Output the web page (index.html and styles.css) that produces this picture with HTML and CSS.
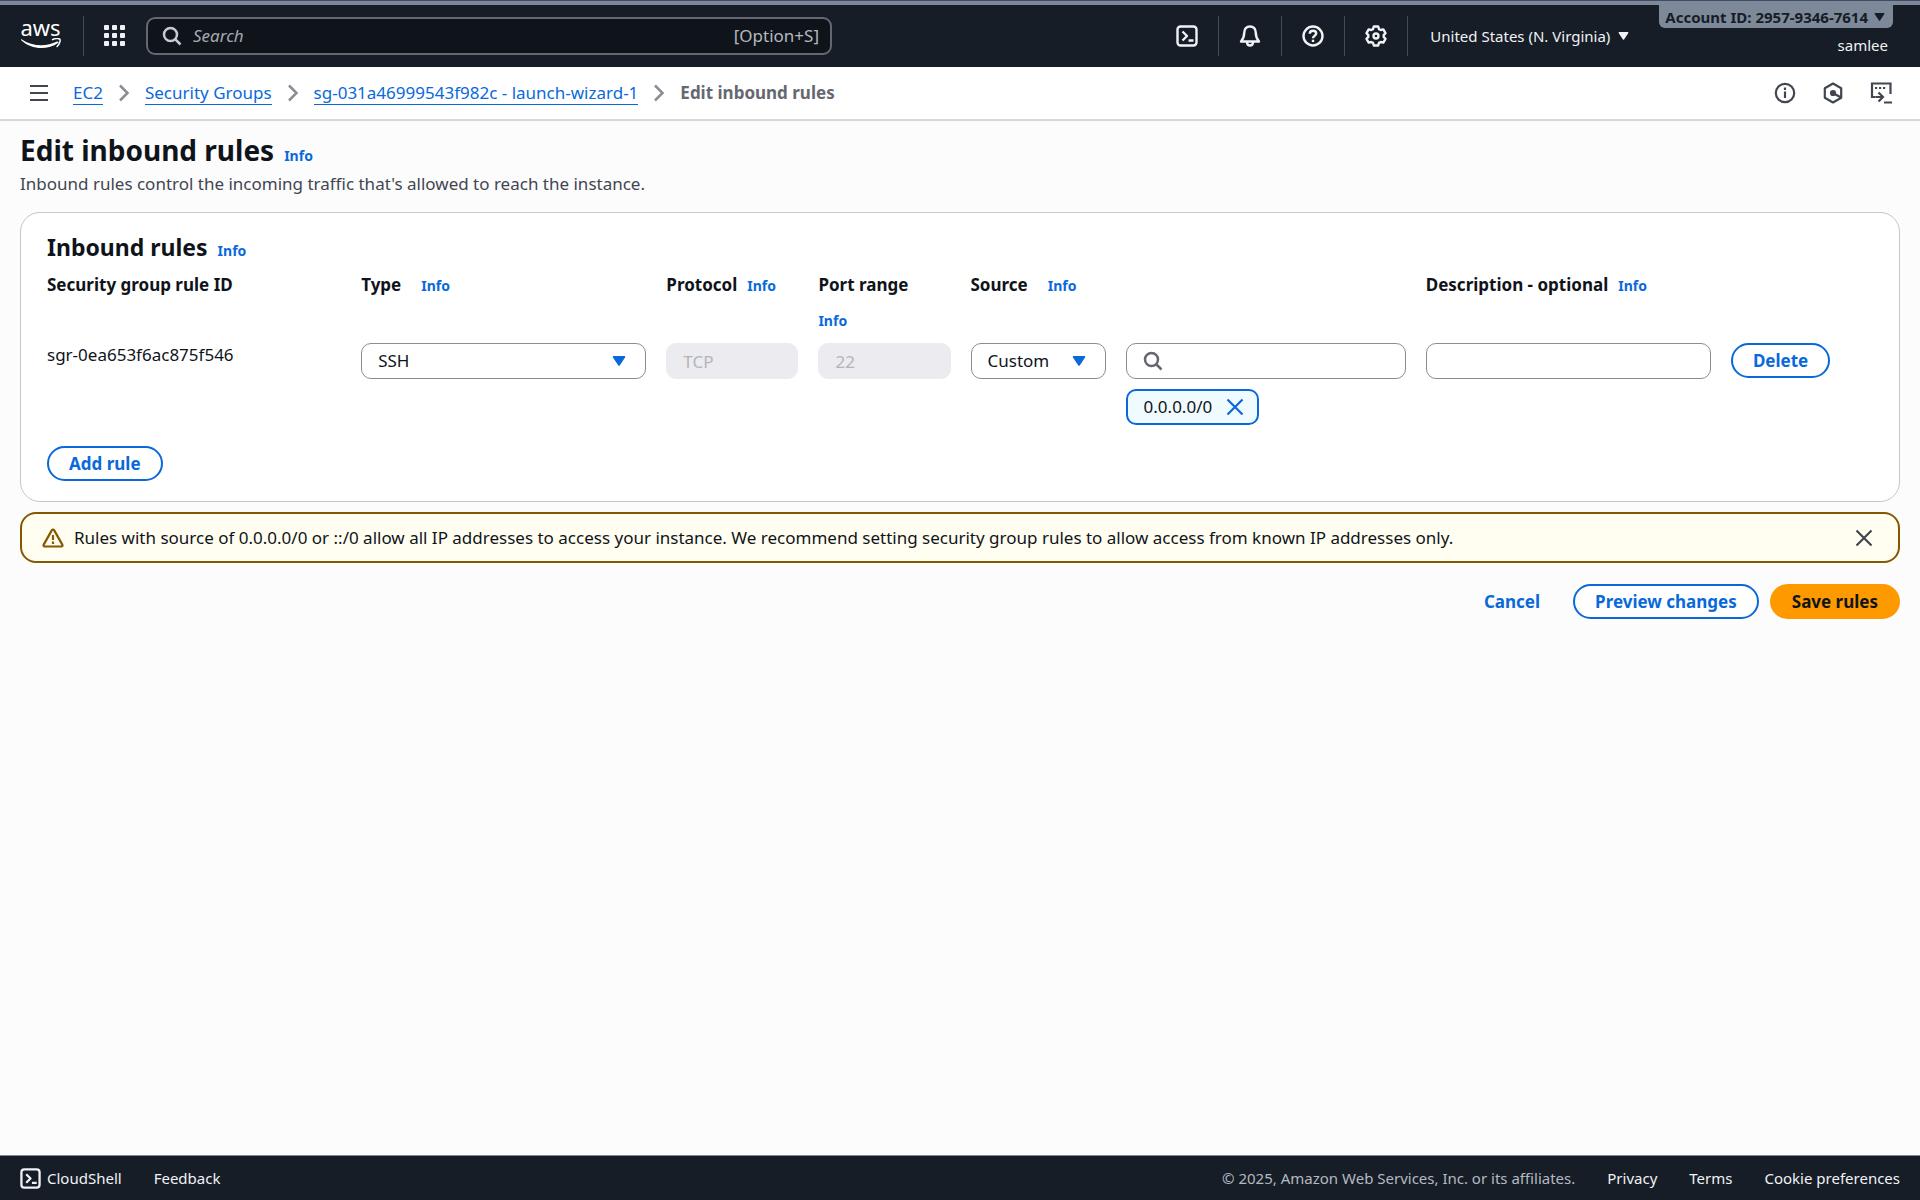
FILE: index.html
```html
<!DOCTYPE html>
<html lang="en">
<head>
<meta charset="utf-8">
<meta name="viewport" content="width=device-width, initial-scale=1">
<title>Edit inbound rules | EC2</title>
<link rel="stylesheet" href="styles.css">
</head>
<body>
<svg class="sprite" aria-hidden="true">
  <symbol id="i-caret" viewBox="0 0 14 12"><path d="M1.500 1h11a.8.8 0 0 1 .7 1.200l-5.500 8.200a.9.9 0 0 1-1.400 0L.8 2.200A.8.8 0 0 1 1.500 1z" fill="currentColor"/></symbol>
  <symbol id="i-search" viewBox="0 0 20 20"><g fill="none" stroke="currentColor" stroke-width="2.500"><circle cx="8.500" cy="8.500" r="6.500"/><path d="M13 13l5.500 5.500"/></g></symbol>
  <symbol id="i-close" viewBox="0 0 18 18"><path d="M1.500 1.500l15 15M16.500 1.500l-15 15" stroke="currentColor" stroke-width="2.200" fill="none"/></symbol>
  <symbol id="i-chevron" viewBox="0 0 12 18"><path d="M2 1.500L9.500 9 2 16.500" stroke="currentColor" stroke-width="2.500" fill="none"/></symbol>
  <symbol id="i-shell" viewBox="0 0 22 22"><g fill="none" stroke="currentColor" stroke-width="2.400" stroke-linejoin="round"><rect x="1.500" y="1.500" width="19" height="19" rx="3"/><path d="M6.500 6.500l4.500 4.500-4.500 4.500M12.500 15.500h5"/></g></symbol>
</svg>

<header class="topbar">
  <a class="logo" href="#" aria-label="AWS home">
    <span class="logo-text">aws</span>
    <svg class="logo-smile" viewBox="0 0 40 11"><path d="M0.500 1.200C11 8.500 25 9.200 36 3.600c1.300-.6 2.200.6 1 1.500C27 12.200 10 12 .3 2.300c-.7-.7-.3-1.400.2-1.100z" fill="#fff"/><path d="M31.500 1.600c2.500-1.200 6.500-1.400 7.300-.4.900 1.100-.3 5.300-2.700 7.300" fill="none" stroke="#fff" stroke-width="1.500" stroke-linecap="round"/></svg>
  </a>
  <button class="apps" type="button" aria-label="Services">
    <svg width="22" height="22" viewBox="0 0 22 22" fill="currentColor"><rect width="5" height="5" rx="1"/><rect x="8" width="5" height="5" rx="1"/><rect x="16" width="5" height="5" rx="1"/><rect y="8" width="5" height="5" rx="1"/><rect x="8" y="8" width="5" height="5" rx="1"/><rect x="16" y="8" width="5" height="5" rx="1"/><rect y="16" width="5" height="5" rx="1"/><rect x="8" y="16" width="5" height="5" rx="1"/><rect x="16" y="16" width="5" height="5" rx="1"/></svg>
  </button>
  <label class="search">
    <svg width="20" height="20"><use href="#i-search"/></svg>
    <input type="search" placeholder="Search" aria-label="Search">
    <span class="shortcut">[Option+S]</span>
  </label>
  <nav class="tools" aria-label="Console tools">
    <button type="button" aria-label="CloudShell"><svg width="22" height="22"><use href="#i-shell"/></svg></button>
    <button type="button" aria-label="Notifications"><svg width="22" height="22" viewBox="0 0 22 22" fill="none" stroke="currentColor" stroke-width="2.400" stroke-linejoin="round"><path d="M11 1.500c-3.600 0-5.700 2.500-5.700 5.800 0 4.200-1 6.500-3.300 9.200h18c-2.300-2.700-3.300-5-3.300-9.200 0-3.300-2.100-5.800-5.700-5.800z"/><path d="M8 17c0 2 1.200 3.500 3 3.500s3-1.500 3-3.500"/></svg></button>
    <button type="button" aria-label="Help"><svg width="22" height="22" viewBox="0 0 22 22" fill="none" stroke="currentColor" stroke-width="2.400"><circle cx="11" cy="11" r="9.500"/><path d="M7.800 8.800c0-2 1.400-3 3.200-3s3.200 1.100 3.200 2.800c0 2.200-3.200 2.200-3.200 4.700"/><path d="M11 14.700v2.400"/></svg></button>
    <button type="button" aria-label="Settings"><svg width="22" height="22" viewBox="0 0 22 22" fill="none" stroke="currentColor" stroke-width="2.400" stroke-linejoin="round"><path d="M8.800 1.500h4.400l.8 2.600 1.700.9 2.600-.6 2.200 3.700-1.800 2v1.800l1.800 2-2.200 3.700-2.600-.6-1.700.9-.8 2.600H8.800L8 17.900 6.300 17l-2.600.6-2.200-3.700 1.800-2v-1.800l-1.800-2 2.200-3.700 2.600.6L8 4.100z"/><circle cx="11" cy="11" r="2.500"/></svg></button>
  </nav>
  <button class="region" type="button">United States (N. Virginia) <svg width="11" height="10"><use href="#i-caret"/></svg></button>
  <div class="account">
    <button class="account-id" type="button">Account ID: 2957-9346-7614 <svg width="11" height="10"><use href="#i-caret"/></svg></button>
    <span class="user">samlee</span>
  </div>
</header>

<div class="crumbbar">
  <button class="menu" type="button" aria-label="Open navigation"><svg width="18" height="16" viewBox="0 0 18 16" stroke="currentColor" stroke-width="2"><path d="M0 1h18M0 8h18M0 15h18"/></svg></button>
  <nav class="crumbs" aria-label="Breadcrumbs">
    <a href="#">EC2</a>
    <svg width="12" height="18"><use href="#i-chevron"/></svg>
    <a href="#">Security Groups</a>
    <svg width="12" height="18"><use href="#i-chevron"/></svg>
    <a href="#">sg-031a46999543f982c - launch-wizard-1</a>
    <svg width="12" height="18"><use href="#i-chevron"/></svg>
    <span aria-current="page">Edit inbound rules</span>
  </nav>
  <div class="panels">
    <button type="button" aria-label="Info panel"><svg width="22" height="22" viewBox="0 0 22 22" fill="none" stroke="currentColor" stroke-width="2.200"><circle cx="11" cy="11" r="9.200"/><path d="M11 9.500V16M11 5.500V8"/></svg></button>
    <button type="button" aria-label="Diagnostics"><svg width="22" height="22" viewBox="0 0 22 22" fill="none" stroke="currentColor" stroke-width="2.200"><path d="M11 1.500l8.200 4.700v9.600L11 20.500l-8.200-4.700V6.200z" stroke-linejoin="round"/><path d="M11 11l8 4.500"/><circle cx="11" cy="11" r="2" fill="currentColor"/></svg></button>
    <button type="button" aria-label="Terminal panel"><svg width="22" height="22" viewBox="0 0 22 22" fill="none" stroke="currentColor" stroke-width="2.200"><path d="M5.500 15H2V1.500h18.500V12"/><path d="M5 6h2.200M9 6h2.200M13 6h2.200"/><path d="M5.500 15h7M8.500 10.500l4.500 4.500-4.500 4.500M14 20.500h8"/></svg></button>
  </div>
</div>

<main class="page">
  <div class="page-head">
    <h1>Edit inbound rules</h1><a class="info" href="#">Info</a>
  </div>
  <p class="lead">Inbound rules control the incoming traffic that's allowed to reach the instance.</p>

  <section class="card">
    <div class="card-head"><h2>Inbound rules</h2><a class="info" href="#">Info</a></div>
    <div class="rules">
      <div class="label">Security group rule ID</div>
      <div class="label wide"><label for="type">Type</label><a class="info" href="#">Info</a></div>
      <div class="label"><label for="protocol">Protocol</label><a class="info" href="#">Info</a></div>
      <div class="label stacked"><label for="port">Port range</label><a class="info" href="#">Info</a></div>
      <div class="label wide span2"><label for="source">Source</label><a class="info" href="#">Info</a></div>
      <div class="label span2"><label for="description">Description - optional</label><a class="info" href="#">Info</a></div>

      <div class="rule-id">sgr-0ea653f6ac875f546</div>
      <div class="select"><select id="type"><option>SSH</option></select><svg width="14" height="12"><use href="#i-caret"/></svg></div>
      <input class="field" id="protocol" type="text" value="TCP" disabled>
      <input class="field" id="port" type="text" value="22" disabled>
      <div class="select"><select id="source"><option>Custom</option></select><svg width="14" height="12"><use href="#i-caret"/></svg></div>
      <div class="source">
        <label class="field lookup"><svg width="20" height="20"><use href="#i-search"/></svg><input type="text" aria-label="Source addresses"></label>
        <span class="token">0.0.0.0/0 <button type="button" aria-label="Remove 0.0.0.0/0"><svg width="18" height="18"><use href="#i-close"/></svg></button></span>
      </div>
      <input class="field" id="description" type="text">
      <div><button class="btn" type="button">Delete</button></div>
    </div>
    <button class="btn" type="button">Add rule</button>
  </section>

  <div class="alert" role="status">
    <svg width="22" height="20" viewBox="0 0 22 20" fill="none" stroke="currentColor" stroke-width="2.200" stroke-linejoin="round"><path d="M9.900 2.100a1.300 1.300 0 0 1 2.200 0l8.200 14.500a1.200 1.200 0 0 1-1.100 1.900H2.800a1.200 1.200 0 0 1-1.100-1.900z"/><path d="M11 7v5M11 13.500v2.500"/></svg>
    <p>Rules with source of 0.0.0.0/0 or ::/0 allow all IP addresses to access your instance. We recommend setting security group rules to allow access from known IP addresses only.</p>
    <button type="button" aria-label="Dismiss"><svg width="18" height="18"><use href="#i-close"/></svg></button>
  </div>

  <div class="actions">
    <button class="btn plain" type="button">Cancel</button>
    <button class="btn" type="button">Preview changes</button>
    <button class="btn primary" type="button">Save rules</button>
  </div>
</main>

<footer class="footer">
  <a class="shell" href="#"><svg width="21" height="21"><use href="#i-shell"/></svg>CloudShell</a>
  <a href="#">Feedback</a>
  <span class="copy">© 2025, Amazon Web Services, Inc. or its affiliates.</span>
  <a href="#">Privacy</a>
  <a href="#">Terms</a>
  <a href="#">Cookie preferences</a>
</footer>
</body>
</html>
```
FILE: styles.css
```css
:root {
  --blue: #0969da;
  --ink: #0f141a;
  --navy: #161d26;
  --slate: #7d8998;
  --fs: 17px;
  --fs-small: 15px;
}
* { box-sizing: border-box; }
body {
  margin: 0;
  min-height: 100vh;
  display: flex;
  flex-direction: column;
  background: #fcfcfd;
  color: var(--ink);
  font: 400 var(--fs)/24px "Noto Sans", "Open Sans", sans-serif;
}
svg { display: block; flex: none; }
button, input, select { font: inherit; color: inherit; }
button { background: none; border: 0; padding: 0; cursor: pointer; }
h1, h2, p { margin: 0; }
a { color: var(--blue); text-decoration: none; }
.sprite { position: absolute; width: 0; height: 0; }

/* Top navigation */
.topbar {
  display: flex;
  align-items: center;
  height: 67px;
  padding: 5px 0 0 20px;
  background: linear-gradient(#414d66 1px, var(--slate) 1px 5px, var(--navy) 5px);
  color: #f0f2f5;
  font-size: var(--fs-small);
}
.logo {
  display: flex;
  flex-direction: column;
  align-items: center;
  width: 64px;
  height: 40px;
  padding-right: 22px;
  border-right: 1px solid #424a55;
  color: #fff;
}
.logo-text { font-size: 22px; line-height: 22px; }
.logo-smile { width: 40px; height: 11px; }
.apps { margin: 0 20px; }
.search {
  display: flex;
  align-items: center;
  gap: 11px;
  flex: 0 1 686px;
  height: 38px;
  padding: 0 11px 0 14px;
  border: 2px solid #656871;
  border-radius: 9px;
  background: #0f141a;
  color: #b4b9c1;
  font-size: 17px;
}
.search svg { color: #c6c9cf; }
.search input {
  flex: 1;
  min-width: 0;
  padding: 0;
  border: 0;
  outline: 0;
  background: none;
}
.search input::placeholder { color: #a4a9b1; font-style: italic; opacity: 1; }
.tools { display: flex; margin-left: auto; }
.tools button {
  display: flex;
  align-items: center;
  justify-content: center;
  width: 63px;
  height: 40px;
  border-right: 1px solid #424a55;
}
.region { display: flex; align-items: center; gap: 8px; margin: 0 30px 0 22px; }
.account {
  align-self: flex-start;
  display: flex;
  flex-direction: column;
  align-items: flex-end;
  gap: 6px;
  margin-right: 27px;
}
.account-id {
  display: flex;
  align-items: center;
  gap: 6px;
  height: 23px;
  padding: 0 8px 0 6px;
  border-radius: 0 0 6px 6px;
  background: var(--slate);
  color: var(--navy);
  font-weight: 700;
}
.user { padding-right: 5px; line-height: 22px; }

/* Breadcrumbs */
.crumbbar {
  display: flex;
  align-items: center;
  height: 54px;
  padding: 0 28px 0 30px;
  border-bottom: 2px solid #d5d7da;
  background: #fff;
}
.menu { margin-right: 25px; color: #424650; }
.crumbs { display: flex; align-items: center; gap: 15px; color: #8c8c94; }
.crumbs a { line-height: 22px; border-bottom: 1px solid var(--blue); }
.crumbs span { color: #656871; font-weight: 700; }
.panels { display: flex; gap: 26px; margin-left: auto; color: #424650; }

/* Page */
.page { flex: 1; padding: 9px 20px 20px; }
.page-head { display: flex; align-items: baseline; gap: 10px; }
h1 { font-size: 28px; line-height: 40px; font-weight: 700; }
h2 { font-size: 23px; line-height: 30px; font-weight: 700; }
.info { font-size: 14px; font-weight: 700; }
.lead { margin-top: 2px; color: #424650; }
.card {
  margin-top: 16px;
  padding: 19px 26px 20px;
  border: 1px solid #c6c6cd;
  border-radius: 20px;
  background: #fff;
}
.card-head { display: flex; align-items: baseline; gap: 10px; }
.rules {
  display: grid;
  grid-template-columns:
    minmax(0, 294fr) minmax(0, 285fr) minmax(0, 132fr) minmax(0, 132fr)
    minmax(0, 135fr) minmax(0, 280fr) minmax(0, 285fr) minmax(0, 142fr);
  gap: 8px 20px;
  align-items: start;
  margin: 8px 0 21px;
}
.label {
  display: flex;
  align-items: baseline;
  gap: 10px;
  min-height: 64px;
  font-weight: 700;
  line-height: 28px;
  white-space: nowrap;
}
.label.wide { gap: 20px; }
.label.stacked { flex-direction: column; gap: 8px; }
.span2 { grid-column: span 2; }
.field, .select select {
  display: block;
  width: 100%;
  height: 36px;
  min-width: 0;
  padding: 0 16px;
  border: 1px solid #8c8c94;
  border-radius: 10px;
  background: #fff;
}
.field:disabled { border-color: #ebebf0; background: #ebebf0; color: #b4b4bb; }
.select { display: grid; align-items: center; }
.select > * { grid-area: 1 / 1; }
.select select { appearance: none; }
.select svg { justify-self: end; margin-right: 20px; color: var(--blue); pointer-events: none; }
.lookup { display: flex; align-items: center; gap: 10px; color: #656871; }
.lookup input { flex: 1; min-width: 0; border: 0; outline: 0; background: none; }
.token {
  display: inline-flex;
  align-items: center;
  gap: 14px;
  height: 36px;
  margin-top: 10px;
  padding: 0 13px 0 16px;
  border: 2px solid var(--blue);
  border-radius: 10px;
  background: #f0fbff;
}
.source { display: flex; flex-direction: column; align-items: flex-start; }
.token button { color: var(--blue); }
.btn {
  height: 35px;
  padding: 0 20px;
  border: 2px solid var(--blue);
  border-radius: 18px;
  background: #fff;
  color: var(--blue);
  font-weight: 700;
  white-space: nowrap;
}
.btn.plain { border-color: transparent; background: none; }
.btn.primary { border-color: #ff9900; background: #ff9900; color: var(--ink); }
.alert {
  display: flex;
  align-items: center;
  gap: 10px;
  min-height: 51px;
  margin-top: 10px;
  padding: 0 25px 0 20px;
  border: 2px solid #855900;
  border-radius: 16px;
  background: #fffef0;
}
.alert > svg { color: #855900; }
.alert p { flex: 1; }
.alert button { color: #424650; }
.actions { display: flex; justify-content: flex-end; gap: 11px; margin-top: 21px; }

/* Footer */
.footer {
  display: flex;
  align-items: center;
  gap: 32px;
  height: 45px;
  padding: 0 20px;
  border-top: 1px solid var(--slate);
  background: var(--navy);
  color: #b4b9c1;
  font-size: var(--fs-small);
}
.footer a { color: #f0f2f5; }
.shell { display: flex; align-items: center; gap: 6px; }
.copy { margin-left: auto; }
```
